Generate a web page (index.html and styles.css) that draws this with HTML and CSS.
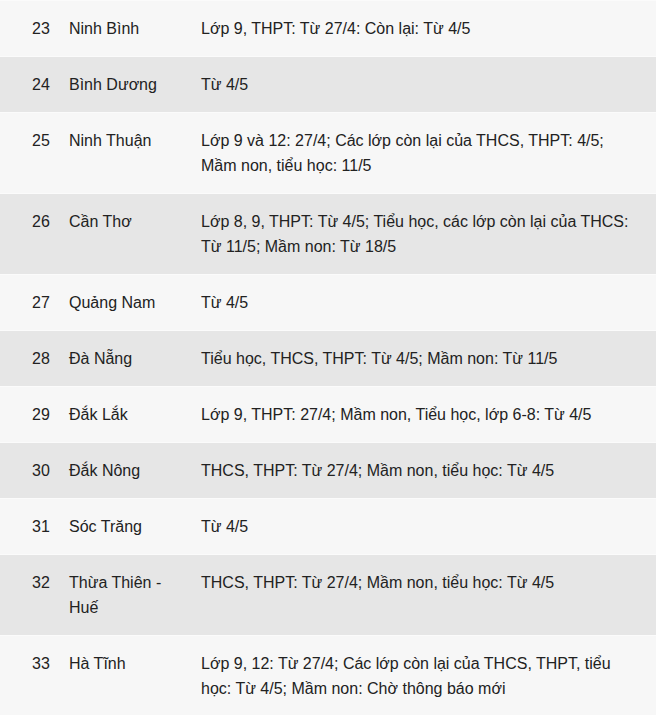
FILE: index.html
```html
<!DOCTYPE html>
<html lang="vi">
<head>
<meta charset="utf-8">
<title>Lịch đi học</title>
<link rel="stylesheet" href="styles.css">
</head>
<body>
<table class="schedule">
  <colgroup>
    <col class="c-num">
    <col class="c-name">
    <col class="c-info">
  </colgroup>
  <tbody>
    <tr><td class="num">23</td><td class="name">Ninh Bình</td><td class="info">Lớp 9, THPT: Từ 27/4: Còn lại: Từ 4/5</td></tr>
    <tr><td class="num">24</td><td class="name">Bình Dương</td><td class="info">Từ 4/5</td></tr>
    <tr><td class="num">25</td><td class="name">Ninh Thuận</td><td class="info">Lớp 9 và 12: 27/4; Các lớp còn lại của THCS, THPT: 4/5; Mầm non, tiểu học: 11/5</td></tr>
    <tr><td class="num">26</td><td class="name">Cần Thơ</td><td class="info">Lớp 8, 9, THPT: Từ 4/5; Tiểu học, các lớp còn lại của THCS: Từ 11/5; Mầm non: Từ 18/5</td></tr>
    <tr><td class="num">27</td><td class="name">Quảng Nam</td><td class="info">Từ 4/5</td></tr>
    <tr><td class="num">28</td><td class="name">Đà Nẵng</td><td class="info">Tiểu học, THCS, THPT: Từ 4/5; Mầm non: Từ 11/5</td></tr>
    <tr><td class="num">29</td><td class="name">Đắk Lắk</td><td class="info">Lớp 9, THPT: 27/4; Mầm non, Tiểu học, lớp 6-8: Từ 4/5</td></tr>
    <tr><td class="num">30</td><td class="name">Đắk Nông</td><td class="info">THCS, THPT: Từ 27/4; Mầm non, tiểu học: Từ 4/5</td></tr>
    <tr><td class="num">31</td><td class="name">Sóc Trăng</td><td class="info">Từ 4/5</td></tr>
    <tr><td class="num">32</td><td class="name">Thừa Thiên - Huế</td><td class="info">THCS, THPT: Từ 27/4; Mầm non, tiểu học: Từ 4/5</td></tr>
    <tr><td class="num">33</td><td class="name">Hà Tĩnh</td><td class="info">Lớp 9, 12: Từ 27/4; Các lớp còn lại của THCS, THPT, tiểu học: Từ 4/5; Mầm non: Chờ thông báo mới</td></tr>
  </tbody>
</table>
</body>
</html>
```
FILE: styles.css
```css
html, body {
  margin: 0;
  padding: 0;
  background: #f7f7f7;
}
body {
  font-family: "Liberation Sans", Arial, sans-serif;
  font-size: 16px;
  line-height: 25px;
  color: #222;
}
.schedule {
  width: 656px;
  table-layout: fixed;
  border-collapse: separate;
  border-spacing: 0;
}
.c-num { width: 69px; }
.c-name { width: 132px; }
.schedule td {
  vertical-align: top;
  padding: 15px 16px 15px 0;
  border-top: 1px solid #fbfbfb;
}
.schedule td.num {
  padding-left: 32px;
  padding-right: 0;
}
.schedule tr:nth-child(odd) td { background: #f7f7f7; }
.schedule tr:nth-child(even) td { background: #e6e6e6; }
```
